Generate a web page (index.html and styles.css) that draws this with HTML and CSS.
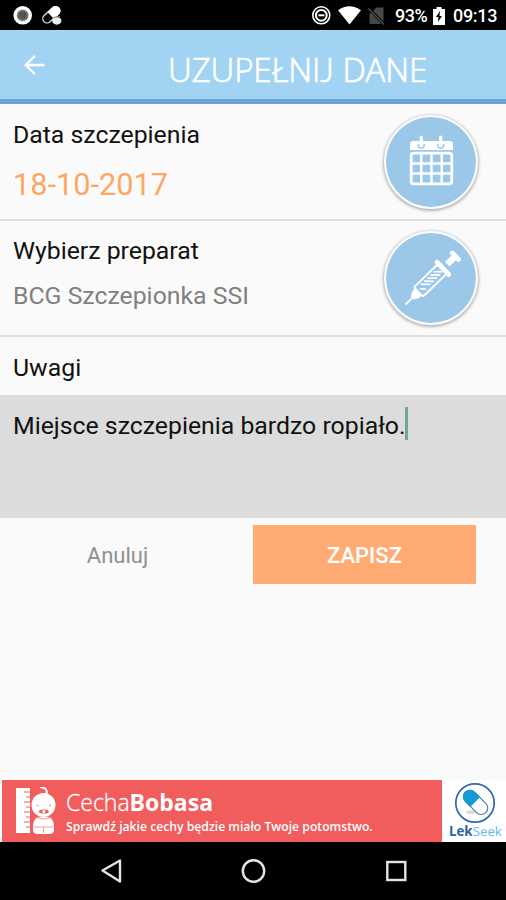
FILE: index.html
```html
<!DOCTYPE html>
<html lang="pl">
<head>
<meta charset="utf-8">
<title>Uzupełnij dane</title>
<link rel="stylesheet" href="styles.css">
</head>
<body>
<div class="status">
  <svg class="status-left" width="64" height="30" viewBox="0 0 64 30">
    <circle cx="22.7" cy="15.3" r="7.6" fill="#777" stroke="#fff" stroke-width="3.4"/>
    <circle cx="22.7" cy="15.3" r="4" fill="#555"/>
    <g transform="translate(51.500 15) rotate(-43)">
      <rect x="-10" y="-4.600" width="20" height="8.600" rx="4.300" fill="#000" stroke="#ddd" stroke-width="1.300"/>
      <path d="M-1-5h7a4.800 4.800 0 0 1 0 9.600h-7z" fill="#fff"/>
    </g>
    <ellipse cx="56.800" cy="20.800" rx="4.600" ry="3.900" fill="#eee"/>
    <path d="M53 17.500l7-1" stroke="#888" stroke-width="1"/>
  </svg>
  <svg class="status-right" width="80" height="30" viewBox="0 0 80 30">
    <circle cx="14.300" cy="15.300" r="8.500" fill="none" stroke="#fff" stroke-width="1.600"/>
    <circle cx="14.300" cy="15.300" r="5.400" fill="none" stroke="#fff" stroke-width="2"/>
    <path d="M11.300 15.300h6" stroke="#fff" stroke-width="2"/>
    <path d="M31 10.200q11.500-8 23 0L42.500 24.500z" fill="#fff"/>
    <path d="M62.500 14l7-6.500h7v16.500h-14z" fill="#484848"/>
    <path d="M61 7.500l16.500 17.500" stroke="#000" stroke-width="3"/>
    <path d="M61.500 8.500l15.500 16" stroke="#555" stroke-width="1.200"/>
  </svg>
  <span class="percent">93%</span>
  <svg class="battery" width="12" height="18" viewBox="0 0 12 18">
    <path d="M0 2h3.500V0h5v2H12v16H0z" fill="#fff"/>
    <path d="M7 4L3 10h2.500L5 15l4-6H6.500z" fill="#000"/>
  </svg>
  <span class="clock">09:13</span>
</div>

<header class="appbar">
  <svg class="back" width="22" height="22" viewBox="0 0 22 22" fill="none" stroke="#fff" stroke-width="2.300">
    <path d="M20.500 11H2M11 1.700L1.700 11l9.300 9.300"/>
  </svg>
  <h1 class="title">UZUPEŁNI<span class="title-j">J</span> DANE</h1>
</header>

<main class="content">
  <section class="row">
    <div>
      <h2 class="label">Data szczepienia</h2>
      <p class="date">18-10-2017</p>
    </div>
    <div class="round">
      <svg width="90" height="90" viewBox="-1 -1 90 90">
        <path d="M23 26a3 3 0 0 1 3-3h37a3 3 0 0 1 3 3v6H23z" fill="#fff"/>
        <rect x="24.200" y="35.200" width="40.600" height="30.600" rx="2.500" fill="none" stroke="#fff" stroke-width="2.800"/>
        <path d="M34.300 35v31M44.500 35v31M54.700 35v31M24 45.500h41M24 55.500h41" stroke="#fff" stroke-width="2.500"/>
        <path d="M31.500 26a3 3 0 1 0 5.500 0M51 26a3 3 0 1 0 5.500 0" fill="none" stroke="#9bc8e8" stroke-width="1.600"/>
        <path d="M34.300 19v8M53.700 19v8" stroke="#fff" stroke-width="3.200" stroke-linecap="round"/>
      </svg>
    </div>
  </section>

  <section class="row row-product">
    <div>
      <h2 class="label">Wybierz preparat</h2>
      <p class="product">BCG Szczepionka SSI</p>
    </div>
    <div class="round">
      <svg width="90" height="90" viewBox="-1 -1 90 90">
        <g transform="translate(18.500 70.500) rotate(-44)" fill="none" stroke="#fff">
          <path d="M0 0h11" stroke-width="1.800"/>
          <path d="M10-1.500l4-2.500h3v8h-3l-4-2.500z" fill="#fff" stroke-width="1.500"/>
          <rect x="18" y="-6.500" width="33" height="13" rx="2" stroke-width="1.900"/>
          <path d="M21.500-1l4 4M25-4l7 7M29.500-4l7 7M34-4l7 7M38.500-4l7 7M43-4l6 6" stroke-width="1.700"/>
          <path d="M52-8.500v17" stroke-width="4.800" stroke-linecap="round"/>
          <path d="M58 0h10" stroke-width="6.500"/>
          <path d="M69.500-4.500v9" stroke-width="4.800" stroke-linecap="round"/>
        </g>
      </svg>
    </div>
  </section>

  <h2 class="label notes-label">Uwagi</h2>
  <div class="notes"><span>Miejsce szczepienia bardzo ropiało.</span><i class="caret"></i></div>

  <div class="actions">
    <span class="cancel">Anuluj</span>
    <span class="save">ZAPISZ</span>
  </div>
</main>

<aside class="banner">
  <svg class="baby" width="42" height="50" viewBox="0 0 42 50">
    <path d="M0 1h14v45H0z" fill="#fff"/>
    <path d="M8 5h6M10 10h4M8 15h6M10 20h4M8 25h6M10 30h4M8 35h6M10 40h4" stroke="#f15d5d" stroke-width="1.200"/>
    <circle cx="27.500" cy="18" r="12" fill="#fff"/>
    <path d="M30 8q3-7-6-8" fill="none" stroke="#fff" stroke-width="2"/>
    <path d="M17 40q0-9 6-10h9q6 1 6 10v3q0 4-5 4H22q-5 0-5-4z" fill="#fff"/>
    <path d="M20.500 18.500h2M33 18.500h2" stroke="#f8a0a0" stroke-width="1.500"/>
    <ellipse cx="27.800" cy="24.500" rx="5" ry="2" fill="#f15d5d"/>
    <circle cx="27.800" cy="24.500" r="1.500" fill="#fff"/>
    <path d="M21 30.500q7 3 14 0M18 40h19M27.500 40v6" fill="none" stroke="#f8a0a0" stroke-width="1.100"/>
  </svg>
  <div class="ad-text">
    <div class="brand">Cecha<b>Bobasa</b></div>
    <div class="tagline">Sprawdź jakie cechy będzie miało Twoje potomstwo.</div>
  </div>
  <div class="lekseek">
    <svg width="42" height="42" viewBox="0 0 42 42">
      <circle cx="21" cy="21" r="19.200" fill="#fff" stroke="#2f68ad" stroke-width="1.700"/>
      <ellipse cx="17" cy="30" rx="5" ry="2" fill="#ddd"/>
      <g transform="translate(21.200 20) rotate(45)">
        <rect x="-14" y="-6.500" width="29" height="13" rx="6.500" fill="#fff" stroke="#4778a8" stroke-width="1.100"/>
        <path d="M0-7h-7.500a7 7 0 0 0 0 14H0z" fill="#149bd4"/>
      </g>
    </svg>
    <div class="lek">Lek<span>Seek</span></div>
  </div>
</aside>

<nav class="nav">
  <svg width="506" height="58" viewBox="0 0 506 58" fill="none" stroke="#e4e4e4" stroke-width="2.400">
    <path d="M102.500 28.500l17.500-10v21z" stroke-linejoin="round"/>
    <circle cx="253.500" cy="29" r="10.700"/>
    <rect x="387.300" y="20" width="18" height="18"/>
  </svg>
</nav>
</body>
</html>
```
FILE: styles.css
```css
* { box-sizing: border-box; }
body {
  margin: 0;
  width: 506px;
  height: 900px;
  display: flex;
  flex-direction: column;
  overflow: hidden;
  background: #fafafa;
  color: #111;
  font-family: Roboto, sans-serif;
}
h1, h2, p { margin: 0; font-weight: 400; }
svg { display: block; flex: none; }
.status {
  height: 30px;
  flex: none;
  display: flex;
  align-items: center;
  background: #000;
  color: #fff;
  font-size: 18px;
  font-weight: 500;
  line-height: 30px;
}
.status-right { margin-left: 243px; }
.percent { width: 46px; padding-left: 8px; padding-top: 2px; letter-spacing: -0.5px; }
.battery { margin-top: 1px; }
.clock { margin-left: 8px; padding-top: 2px; letter-spacing: -0.3px; }
.appbar {
  height: 74px;
  flex: none;
  display: flex;
  align-items: center;
  background: #a2d3f3;
  border-bottom: 5px solid #70a3d1;
}
.back { margin-left: 24px; }
.title {
  margin-left: 122px;
  padding-top: 10px;
  color: #fff;
  font-family: "Open Sans", sans-serif;
  font-size: 33px;
  font-weight: 300;
  line-height: 45px;
  letter-spacing: -0.1px;
  -webkit-text-stroke: 0.7px #fff;
  white-space: nowrap;
}
.title-j { font-family: Lato, sans-serif; letter-spacing: 0; }
.content { flex: 1; }
.row {
  height: 117px;
  display: flex;
  justify-content: space-between;
  padding: 11px 28px 0 13px;
  border-bottom: 2px solid #e1e1e1;
}
.row-product { height: 116px; padding-top: 10px; }
.label { font-size: 24.800px; line-height: 40px; white-space: nowrap; }
.date { margin-top: 10px; font-size: 30.700px; line-height: 40px; color: #fda766; }
.product { margin-top: 5px; font-size: 24.800px; line-height: 40px; color: #808080; white-space: nowrap; }
.round {
  width: 94px;
  height: 94px;
  border: 2px solid #fafafa;
  border-radius: 50%;
  background: #9bc8e8;
  background-clip: padding-box;
  box-shadow: 0 1px 3px 1px #b4b4b4;
}
.notes-label { height: 58px; padding: 11px 13px 0; }
.notes {
  height: 123px;
  display: flex;
  padding: 12px 13px;
  background: #dcdcdc;
  font-size: 24.800px;
  line-height: 38px;
  white-space: nowrap;
}
.caret { width: 3px; height: 33px; margin-left: -1px; background: #6fa898; }
.actions { display: flex; height: 66px; padding-top: 7px; font-size: 22px; line-height: 61px; text-align: center; }
.cancel { width: 235px; color: #909090; }
.save { width: 223px; height: 59px; margin-left: 18px; background: #ffab73; color: #fff; font-weight: 500; }
.banner {
  height: 62px;
  flex: none;
  display: flex;
  margin-left: 2px;
  background: #f15d5d;
  color: #fff;
}
.baby { margin: 7px 0 0 14px; }
.ad-text { margin-left: 8px; width: 376px; white-space: nowrap; font-family: "Open Sans", sans-serif; }
.brand { font-size: 23px; line-height: 30px; margin-top: 7px; font-weight: 300; -webkit-text-stroke: 0.3px #fff; }
.brand b { font-weight: 700; -webkit-text-stroke: 0; }
.tagline { font-size: 12.200px; line-height: 19px; font-weight: 600; }
.lekseek { width: 64px; height: 62px; padding: 2px 0 0 12px; background: #fff; }
.lek { margin-left: -5px; color: #2565a8; font: 700 13.300px/15px "Open Sans", sans-serif; white-space: nowrap; }
.lek span { color: #62bde7; font-weight: 400; }
.nav { height: 58px; flex: none; background: #000; }
```
